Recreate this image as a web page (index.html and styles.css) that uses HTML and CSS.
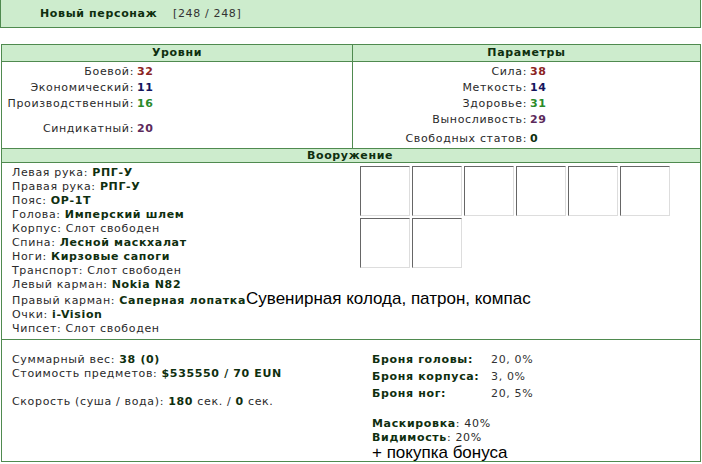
FILE: index.html
```html
<!doctype html>
<html lang="ru">
<head>
    <meta charset="UTF-8">
    <title>Новый персонаж</title>
    <link rel="stylesheet" href="styles.css">
</head>
<body>
    <div class="top">
        <b class="name">Новый персонаж</b>
        <span class="hp">[248 / 248]</span>
    </div>

    <div class="sheet">
        <div class="head">Уровни</div>
        <div class="head head-r">Параметры</div>

        <div class="cell">
            <div class="levels">
                <span class="lbl">Боевой:</span><b class="red">32</b>
                <span class="lbl">Экономический:</span><b class="navy">11</b>
                <span class="lbl">Производственный:</span><b class="green">16</b>
                <span class="lbl gap">Синдикатный:</span><b class="purple gap">20</b>
            </div>
        </div>
        <div class="cell cell-r">
            <div class="params">
                <span class="lbl">Сила:</span><b class="red">38</b>
                <span class="lbl">Меткость:</span><b class="navy">14</b>
                <span class="lbl">Здоровье:</span><b class="green">31</b>
                <span class="lbl">Выносливость:</span><b class="purple">29</b>
                <span class="lbl low">Свободных статов:</span><b class="dark low">0</b>
            </div>
        </div>

        <div class="head wide">Вооружение</div>

        <div class="equip wide">
            <ul class="items">
                <li>Левая рука: <b>РПГ-У</b></li>
                <li>Правая рука: <b>РПГ-У</b></li>
                <li>Пояс: <b>ОР-1Т</b></li>
                <li>Голова: <b>Имперский шлем</b></li>
                <li>Корпус: Слот свободен</li>
                <li>Спина: <b>Лесной маскхалат</b></li>
                <li>Ноги: <b>Кирзовые сапоги</b></li>
                <li>Транспорт: Слот свободен</li>
                <li>Левый карман: <b>Nokia N82</b></li>
                <li>Правый карман: <b>Саперная лопатка</b><span class="big">Сувенирная колода, патрон, компас</span></li>
                <li>Очки: <b>i-Vision</b></li>
                <li>Чипсет: Слот свободен</li>
            </ul>
            <div class="slots">
                <div class="slot"></div>
                <div class="slot"></div>
                <div class="slot"></div>
                <div class="slot"></div>
                <div class="slot"></div>
                <div class="slot"></div>
                <div class="slot"></div>
                <div class="slot"></div>
            </div>
        </div>

        <div class="summary wide">
            <div class="sum-l">
                <p>Суммарный вес: <b>38 (0)</b></p>
                <p>Стоимость предметов: <b>$535550 / 70 EUN</b></p>
                <p class="sp">Скорость (суша / вода): <b>180</b> сек. / <b>0</b> сек.</p>
            </div>
            <div class="sum-r">
                <div class="armor">
                    <b>Броня головы:</b><span>20, 0%</span>
                    <b>Броня корпуса:</b><span>3, 0%</span>
                    <b>Броня ног:</b><span>20, 5%</span>
                </div>
                <p class="mask"><b>Маскировка</b>: 40%</p>
                <p><b>Видимость</b>: 20%</p>
                <p class="bonus">+ покупка бонуса</p>
            </div>
        </div>
    </div>
</body>
</html>
```

FILE: styles.css
```css
*{
    margin:0;
    padding:0;
}
ul{
    list-style: none;
}
body{
    font-family: "DejaVu Sans", Verdana, sans-serif;
    font-size: 11px;
    letter-spacing: 0.65px;
    color: #2a2a2a;
    background: #fff;
}
b{
    color: #0f2f0f;
}
.top{
    width: 701px;
    height: 28px;
    box-sizing: border-box;
    background: #cdeccd;
    border: 1px solid #4f8a4f;
    border-top: 0;
    display: flex;
    align-items: center;
    padding-left: 39px;
}
.top .name{
    width: 133px;
    color: #0f2f0f;
}
.top .hp{
    color: #333;
}
.sheet{
    margin: 16px 0 0 1px;
    width: 700px;
    box-sizing: border-box;
    border: 1px solid #4f8a4f;
    display: grid;
    grid-template-columns: 350px 1fr;
}
.wide{
    grid-column: 1 / 3;
}
.head{
    height: 16px;
    line-height: 16px;
    background: #cdeccd;
    border-bottom: 1px solid #4f8a4f;
    text-align: center;
    font-weight: bold;
    color: #0f2f0f;
}
.head-r, .cell-r{
    border-left: 1px solid #4f8a4f;
}
.cell{
    height: 86px;
    border-bottom: 1px solid #4f8a4f;
}
.head.wide{
    height: 13px;
    line-height: 14px;
    text-indent: -2px;
}
.levels, .params{
    display: grid;
    justify-content: start;
    column-gap: 3px;
    line-height: 16px;
    padding-top: 2px;
}
.levels{
    grid-template-columns: 132px auto;
}
.params{
    grid-template-columns: 174px auto;
}
.lbl{
    text-align: right;
}
.gap{
    margin-top: 9px;
}
.low{
    margin-top: 3px;
}
.red{ color: #8b2323; }
.navy{ color: #15155e; }
.green{ color: #2a8a2a; }
.purple{ color: #5c2a5c; }
.dark{ color: #0f2f0f; }

.equip{
    height: 176px;
    border-bottom: 1px solid #4f8a4f;
    display: grid;
    grid-template-columns: 358px 1fr;
}
.items{
    padding: 3px 0 0 10px;
    line-height: 14px;
    white-space: nowrap;
}
.big{
    font-family: "Liberation Sans", Arial, sans-serif;
    font-size: 17px;
    letter-spacing: 0;
    line-height: 14px;
    color: #000;
}
.slots{
    padding-top: 3px;
    display: grid;
    grid-template-columns: repeat(6, 50px);
    grid-auto-rows: 50px;
    gap: 2px;
    align-content: start;
}
.slot{
    box-sizing: border-box;
    border: 1px solid #ddd;
    border-top-color: #666;
    border-left-color: #666;
}

.summary{
    height: 121px;
    display: grid;
    grid-template-columns: 370px 1fr;
}
.sum-l{
    padding: 13px 0 0 10px;
    line-height: 14px;
}
.sp{
    margin-top: 14px;
}
.sum-r{
    padding-top: 13px;
    line-height: 14px;
}
.armor{
    display: grid;
    grid-template-columns: 119px auto;
    justify-content: start;
    row-gap: 3px;
}
.armor span{
    color: #333;
}
.mask{
    margin-top: 16px;
}
.bonus{
    font-family: "Liberation Sans", Arial, sans-serif;
    font-size: 17px;
    letter-spacing: 0;
    line-height: 16px;
    color: #000;
}
```
